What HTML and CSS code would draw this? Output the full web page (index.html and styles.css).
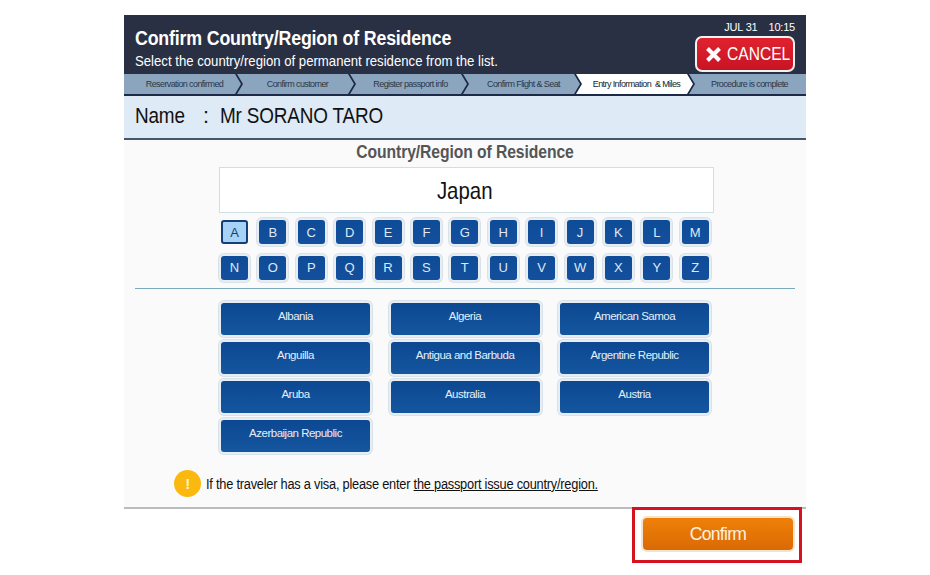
FILE: index.html
```html
<!DOCTYPE html>
<html lang="en">

<head>
    <meta charset="UTF-8">
    <title>Confirm Country/Region of Residence</title>
    <link rel="stylesheet" href="styles.css">
</head>

<body>
    <div class="screen">
        <!-- Header -->
        <div class="header">
            <div class="header-text">
                <h1>Confirm Country/Region of Residence</h1>
                <p>Select the country/region of permanent residence from the list.</p>
            </div>
            <div class="header-side">
                <div class="clock"><span>JUL 31</span><span>10:15</span></div>
                <div class="cancel">
                    <svg width="17" height="17" viewBox="0 0 17 17">
                        <path d="M2.5 2.5 L14.5 14.5 M14.5 2.5 L2.5 14.5" stroke="#fff" stroke-width="4" />
                    </svg>
                    <span class="cancel-label">CANCEL</span>
                </div>
            </div>
        </div>

        <!-- Steps -->
        <div class="steps">
            <div class="step first">Reservation confirmed</div>
            <div class="step">Confirm customer</div>
            <div class="step">Register passport info</div>
            <div class="step">Confirm Flight &amp; Seat</div>
            <div class="step active">Entry Information &nbsp;&amp; Miles</div>
            <div class="step last">Procedure is complete</div>
        </div>

        <div class="name-bar">
            <span class="name-label">Name</span>
            <span class="name-colon">:</span>
            <span class="name-value">Mr SORANO TARO</span>
        </div>

        <!-- Selection -->
        <div class="content">
            <h2>Country/Region of Residence</h2>
            <div class="selected"><span class="selected-text">Japan</span></div>

            <div class="letters">
                <div class="letter current">A</div>
                <div class="letter">B</div>
                <div class="letter">C</div>
                <div class="letter">D</div>
                <div class="letter">E</div>
                <div class="letter">F</div>
                <div class="letter">G</div>
                <div class="letter">H</div>
                <div class="letter">I</div>
                <div class="letter">J</div>
                <div class="letter">K</div>
                <div class="letter">L</div>
                <div class="letter">M</div>
                <div class="letter">N</div>
                <div class="letter">O</div>
                <div class="letter">P</div>
                <div class="letter">Q</div>
                <div class="letter">R</div>
                <div class="letter">S</div>
                <div class="letter">T</div>
                <div class="letter">U</div>
                <div class="letter">V</div>
                <div class="letter">W</div>
                <div class="letter">X</div>
                <div class="letter">Y</div>
                <div class="letter">Z</div>
            </div>

            <div class="divider"></div>

            <div class="countries">
                <div class="country">Albania</div>
                <div class="country">Algeria</div>
                <div class="country">American Samoa</div>
                <div class="country">Anguilla</div>
                <div class="country">Antigua and Barbuda</div>
                <div class="country">Argentine Republic</div>
                <div class="country">Aruba</div>
                <div class="country">Australia</div>
                <div class="country">Austria</div>
                <div class="country">Azerbaijan Republic</div>
            </div>

            <div class="notice">
                <span class="notice-icon">!</span>
                <span class="notice-text">If the traveler has a visa, please enter <u>the passport issue country/region.</u></span>
            </div>
        </div>
    </div>

    <div class="footer">
        <div class="confirm-frame">
            <div class="confirm">Confirm</div>
        </div>
    </div>
</body>

</html>
```

FILE: styles.css
```css
body {
    margin: 0;
    padding: 15px 0 0 124px;
    background-color: #fff;
    font-family: "Liberation Sans", Arial, sans-serif;
    color: #111;
}

.screen {
    width: 682px;
    height: 494px;
    background: #fafafb;
    border-bottom: 2px solid #bbb;
    box-sizing: border-box;
    overflow: hidden;
}

/* Header */
.header {
    display: flex;
    justify-content: space-between;
    height: 59px;
    background: #2a3044;
    color: #fff;
}

.header-text {
    padding: 11px 0 0 11px;
}

/* the text in the kiosk font runs narrower than Arial */
h1 {
    margin: 0;
    font-size: 20px;
    line-height: 24px;
    letter-spacing: -0.2px;
    white-space: nowrap;
    transform: scaleX(0.89);
    transform-origin: left;
}

.header-text p {
    margin: 2px 0 0;
    font-size: 14.5px;
    line-height: 18px;
    white-space: nowrap;
    transform: scaleX(0.9075);
    transform-origin: left;
}

.header-side {
    display: flex;
    flex-direction: column;
    align-items: flex-end;
    padding: 6px 11px 0 0;
}

.clock {
    display: flex;
    gap: 11px;
    font-size: 11px;
    line-height: 13px;
    letter-spacing: -0.2px;
}

.cancel {
    display: flex;
    align-items: center;
    gap: 5px;
    box-sizing: border-box;
    width: 100px;
    height: 36px;
    margin: 2px 0 0;
    padding-left: 8px;
    background: linear-gradient(#e0222f, #c81424);
    border: 2px solid #f3f3f3;
    border-radius: 7px;
}

.cancel svg {
    flex-shrink: 0;
}

.cancel-label {
    font-size: 19px;
    transform: scaleX(0.82);
    transform-origin: left;
}

/* Steps */
.steps {
    display: flex;
    height: 22px;
    padding-bottom: 2px;
    box-sizing: border-box;
    background: #1c2947;
}

.step {
    flex: 1;
    margin-left: -4px;
    padding-left: 4px;
    display: flex;
    align-items: center;
    justify-content: center;
    background: #8ba5bf;
    color: #2a3648;
    font-size: 9px;
    letter-spacing: -0.6px;
    clip-path: polygon(0 0, calc(100% - 6px) 0, 100% 50%, calc(100% - 6px) 100%, 0 100%, 6px 50%);
}

.step.first {
    margin-left: 0;
    clip-path: polygon(0 0, calc(100% - 6px) 0, 100% 50%, calc(100% - 6px) 100%, 0 100%);
}

.step.last {
    clip-path: polygon(0 0, 100% 0, 100% 100%, 0 100%, 6px 50%);
}

.step.active {
    background: #fff;
    color: #222;
}

.name-bar {
    display: flex;
    align-items: center;
    box-sizing: border-box;
    height: 44px;
    padding: 0 0 2px 11px;
    background: #deeaf6;
    border-bottom: 2px solid #45566b;
    font-size: 21.5px;
    letter-spacing: -0.2px;
}

.name-label {
    width: 68px;
    transform: scaleX(0.88);
    transform-origin: left;
}

.name-colon {
    width: 17px;
}

.name-value {
    white-space: nowrap;
    transform: scaleX(0.88);
    transform-origin: left;
}

/* Selection */
.content {
    padding: 0 11px;
}

h2 {
    margin: 2px 0 0;
    text-align: center;
    font-size: 17.5px;
    line-height: 21px;
    color: #555;
    letter-spacing: -0.1px;
    transform: scaleX(0.897);
}

.selected {
    box-sizing: border-box;
    width: 495px;
    height: 46px;
    margin: 4px 0 0 84px;
    padding-right: 4px;
    background: #fff;
    border: 1px solid #cfe0e4;
    text-align: center;
    font-size: 24px;
    line-height: 46px;
}

.selected-text {
    display: inline-block;
    transform: scaleX(0.85);
}

.letters {
    display: grid;
    grid-template-columns: repeat(13, 27px);
    grid-auto-rows: 24px;
    column-gap: 11.4px;
    row-gap: 11.5px;
    margin: 7px 0 0 86px;
}

.letter {
    display: flex;
    align-items: center;
    justify-content: center;
    background: linear-gradient(#0f4c97, #134f9d);
    border-radius: 3px;
    box-shadow: 0 0 0 2px #e6edf3, 0 0 0 3px #d8e2ea;
    color: #dfe9f4;
    font-size: 13px;
}

.letter.current {
    background: #a6d2f6;
    border: 2px solid #123f78;
    box-sizing: border-box;
    color: #1c3f70;
    box-shadow: none;
}

.divider {
    height: 1px;
    margin-top: 8px;
    background: #79aac0;
}

.countries {
    display: grid;
    grid-template-columns: repeat(3, 149px);
    grid-auto-rows: 32px;
    column-gap: 20.5px;
    row-gap: 7.3px;
    margin: 14px 0 0 86px;
}

.country {
    display: flex;
    justify-content: center;
    padding-top: 7px;
    box-sizing: border-box;
    background: linear-gradient(#0d4892, #14569f);
    border-radius: 3px;
    box-shadow: 0 0 0 2px #e6edf3, 0 0 0 3px #d8e2ea;
    color: #e6eff8;
    font-size: 11.5px;
    letter-spacing: -0.5px;
}

.notice {
    display: flex;
    align-items: center;
    gap: 5px;
    margin: 18px 0 0 39px;
    font-size: 14px;
    letter-spacing: -0.25px;
}

.notice-icon {
    width: 27px;
    height: 27px;
    border-radius: 50%;
    background: #fbb90f;
    color: #fff3c8;
    font-size: 15px;
    font-weight: bold;
    line-height: 27px;
    text-align: center;
}

.notice-text {
    white-space: nowrap;
    transform: scaleX(0.914);
    transform-origin: left;
}

/* Confirm */
.footer {
    display: flex;
    justify-content: flex-end;
    width: 678px;
    margin-top: -2px;
}

.confirm-frame {
    box-sizing: border-box;
    width: 170px;
    height: 56px;
    padding: 8px 0 0 8px;
    border: 3px solid #d5121e;
    background: #fff;
}

.confirm {
    width: 150px;
    height: 32px;
    background: linear-gradient(#f08008, #d96a04);
    border-radius: 4px;
    box-shadow: 0 0 0 2px #f6e3cc;
    color: #fdf0e0;
    font-size: 17.5px;
    letter-spacing: -0.7px;
    line-height: 33px;
    text-align: center;
}
```
